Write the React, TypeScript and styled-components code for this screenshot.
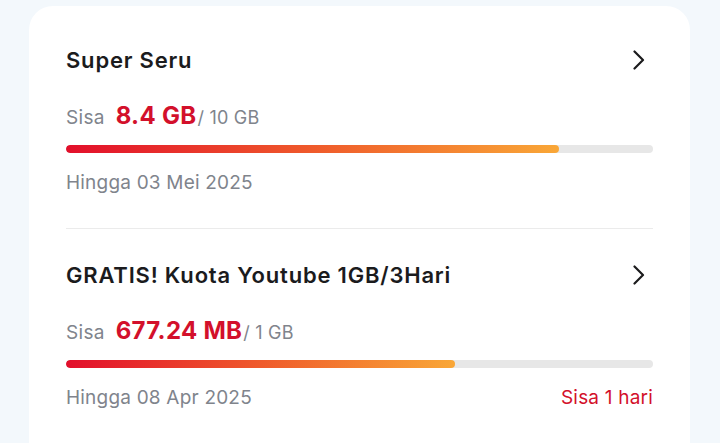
import React from 'react'
import styled, { createGlobalStyle } from 'styled-components'

const GlobalStyle = createGlobalStyle`
  body {
    margin: 0;
    background: #f3f8fc;
    font-family: 'Inter', 'Liberation Sans', sans-serif;
  }
`

interface IQuota {
  title: string
  remaining: string
  total: string
  percent: number
  until: string
  note?: string
}

const quotas: IQuota[] = [
  {
    title: 'Super Seru',
    remaining: '8.4 GB',
    total: '10 GB',
    percent: 84,
    until: 'Hingga 03 Mei 2025'
  },
  {
    title: 'GRATIS! Kuota Youtube 1GB/3Hari',
    remaining: '677.24 MB',
    total: '1 GB',
    percent: 66.2,
    until: 'Hingga 08 Apr 2025',
    note: 'Sisa 1 hari'
  }
]

const Page = styled.div`
  padding: 6px 30px 0 29px;
  height: 443px;
  box-sizing: border-box;
  overflow: hidden;
`

const Card = styled.div`
  background: #ffffff;
  border-radius: 24px;
  padding: 40px 37px 40px;
`

const Item = styled.div<{ $first?: boolean }>`
  padding: ${(p) => (p.$first ? '0' : '32px')} 0 32px;
  border-top: ${(p) => (p.$first ? 'none' : '1px solid #ebebeb')};
`

const Header = styled.div`
  display: flex;
  align-items: center;
  justify-content: space-between;
  height: 28px;
`

const Title = styled.div`
  font-size: 22px;
  font-weight: 600;
  letter-spacing: 0.8px;
  color: #1b1b1d;
`

const Chevron = styled.svg`
  width: 12px;
  height: 20px;
  margin-right: 8px;
`

const Usage = styled.div`
  display: flex;
  align-items: baseline;
  margin-top: 27px;
  line-height: 30px;
`

const Label = styled.span`
  font-size: 19px;
  letter-spacing: 0.3px;
  color: #80848c;
  margin-right: 11px;
`

const Amount = styled.span`
  font-size: 24px;
  font-weight: 700;
  letter-spacing: 0.3px;
  color: #d3102b;
`

const Total = styled.span`
  font-size: 18px;
  letter-spacing: 0.2px;
  color: #80848c;
  margin-left: 1px;
`

const Track = styled.div`
  margin-top: 12px;
  height: 8px;
  border-radius: 4px;
  background: #e7e7e7;
  overflow: hidden;
`

const Fill = styled.div`
  height: 100%;
  border-radius: 4px;
  background: linear-gradient(90deg, #e20f2b 0%, #ef5a2b 50%, #f9a737 100%);
`

const Footer = styled.div`
  display: flex;
  justify-content: space-between;
  margin-top: 17px;
  line-height: 26px;
  font-size: 19px;
  letter-spacing: 0.2px;
  color: #80848c;
`

const Note = styled.span`
  color: #d3102b;
`

const App: React.FC = () => {
  return (
    <Page>
      <GlobalStyle />
      <Card>
        {quotas.map((q, i) => (
          <Item key={q.title} $first={i === 0}>
            <Header>
              <Title>{q.title}</Title>
              <Chevron viewBox='0 0 12 20' fill='none'>
                <path
                  d='M1.5 1.5 L10 10 L1.5 18.5'
                  stroke='#1b1b1d'
                  strokeWidth='2.2'
                  strokeLinecap='round'
                  strokeLinejoin='round'
                />
              </Chevron>
            </Header>
            <Usage>
              <Label>Sisa</Label>
              <Amount>{q.remaining}</Amount>
              <Total>/ {q.total}</Total>
            </Usage>
            <Track>
              <Fill style={{ width: `${q.percent}%` }} />
            </Track>
            <Footer>
              <span>{q.until}</span>
              {q.note && <Note>{q.note}</Note>}
            </Footer>
          </Item>
        ))}
      </Card>
    </Page>
  )
}

export default App
